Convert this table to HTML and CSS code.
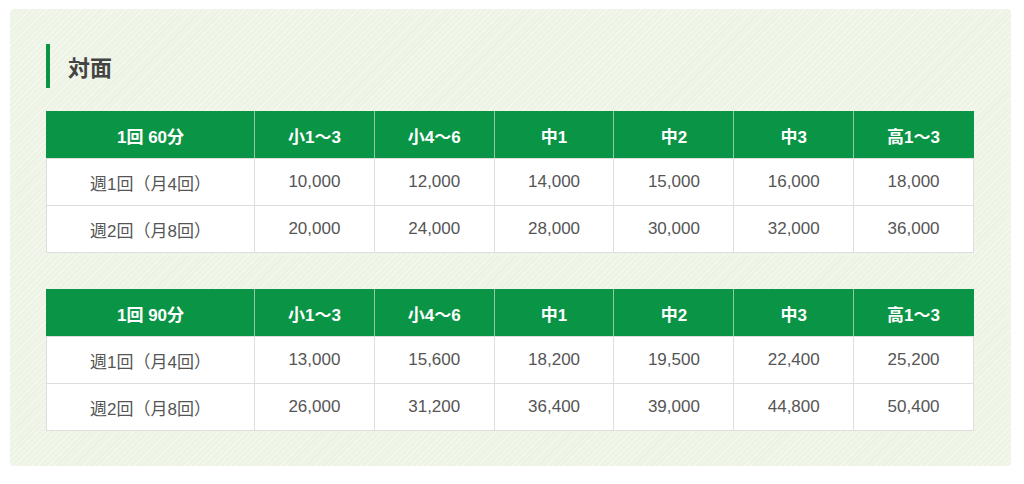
FILE: index.html
```html
<!DOCTYPE html>
<html lang="ja">
<head>
<meta charset="utf-8">
<link rel="stylesheet" href="styles.css">
</head>
<body>
<section class="panel">
  <h2 class="heading">対面</h2>
  <table class="price">
    <colgroup><col class="c-first"><col><col><col><col><col><col></colgroup>
    <thead>
      <tr><th>1回 60分</th><th>小1〜3</th><th>小4〜6</th><th>中1</th><th>中2</th><th>中3</th><th>高1〜3</th></tr>
    </thead>
    <tbody>
      <tr><td>週1回（月4回）</td><td>10,000</td><td>12,000</td><td>14,000</td><td>15,000</td><td>16,000</td><td>18,000</td></tr>
      <tr><td>週2回（月8回）</td><td>20,000</td><td>24,000</td><td>28,000</td><td>30,000</td><td>32,000</td><td>36,000</td></tr>
    </tbody>
  </table>
  <table class="price">
    <colgroup><col class="c-first"><col><col><col><col><col><col></colgroup>
    <thead>
      <tr><th>1回 90分</th><th>小1〜3</th><th>小4〜6</th><th>中1</th><th>中2</th><th>中3</th><th>高1〜3</th></tr>
    </thead>
    <tbody>
      <tr><td>週1回（月4回）</td><td>13,000</td><td>15,600</td><td>18,200</td><td>19,500</td><td>22,400</td><td>25,200</td></tr>
      <tr><td>週2回（月8回）</td><td>26,000</td><td>31,200</td><td>36,400</td><td>39,000</td><td>44,800</td><td>50,400</td></tr>
    </tbody>
  </table>
</section>
</body>
</html>
```
FILE: styles.css
```css
html, body {
  margin: 0;
  padding: 0;
  background: #fff;
}
body {
  font-family: "Liberation Sans", "Noto Sans CJK JP", sans-serif;
  color: #555;
}
.panel {
  margin: 9px 13px 0 10px;
  width: 1001px;
  box-sizing: border-box;
  padding: 35px 37px 35px 36px;
  border-radius: 4px;
  background-color: #edf4e5;
  background-image: repeating-linear-gradient(-45deg, rgba(255,255,255,0.4) 0 1px, rgba(255,255,255,0) 1px 4px);
}
.heading {
  margin: 0 0 23px;
  height: 44px;
  display: flex;
  align-items: center;
  border-left: 4px solid #0a9445;
  padding-left: 18px;
  font-size: 22px;
  font-weight: bold;
  color: #444;
  font-family: "Noto Sans CJK JP", sans-serif;
}
.price {
  width: 928px;
  border-collapse: collapse;
  table-layout: fixed;
  background: #fff;
  margin-bottom: 36px;
}
.price:last-child {
  margin-bottom: 0;
}
.c-first { width: 208px; }
.price th, .price td {
  height: 47px;
  box-sizing: border-box;
  padding: 0;
  text-align: center;
  vertical-align: middle;
  font-size: 17px;
  border: 1px solid #dedede;
}
.price th {
  background: #0a9445;
  color: #fff;
  font-weight: bold;
  font-size: 17px;
  border-color: #8fc9a3;
  border-top-color: #0a9445;
  border-bottom-color: #dedede;
}
.price thead th:first-child { border-left-color: #0a9445; }
.price thead th:last-child { border-right-color: #0a9445; }
.price td {
  color: #555;
}
```
